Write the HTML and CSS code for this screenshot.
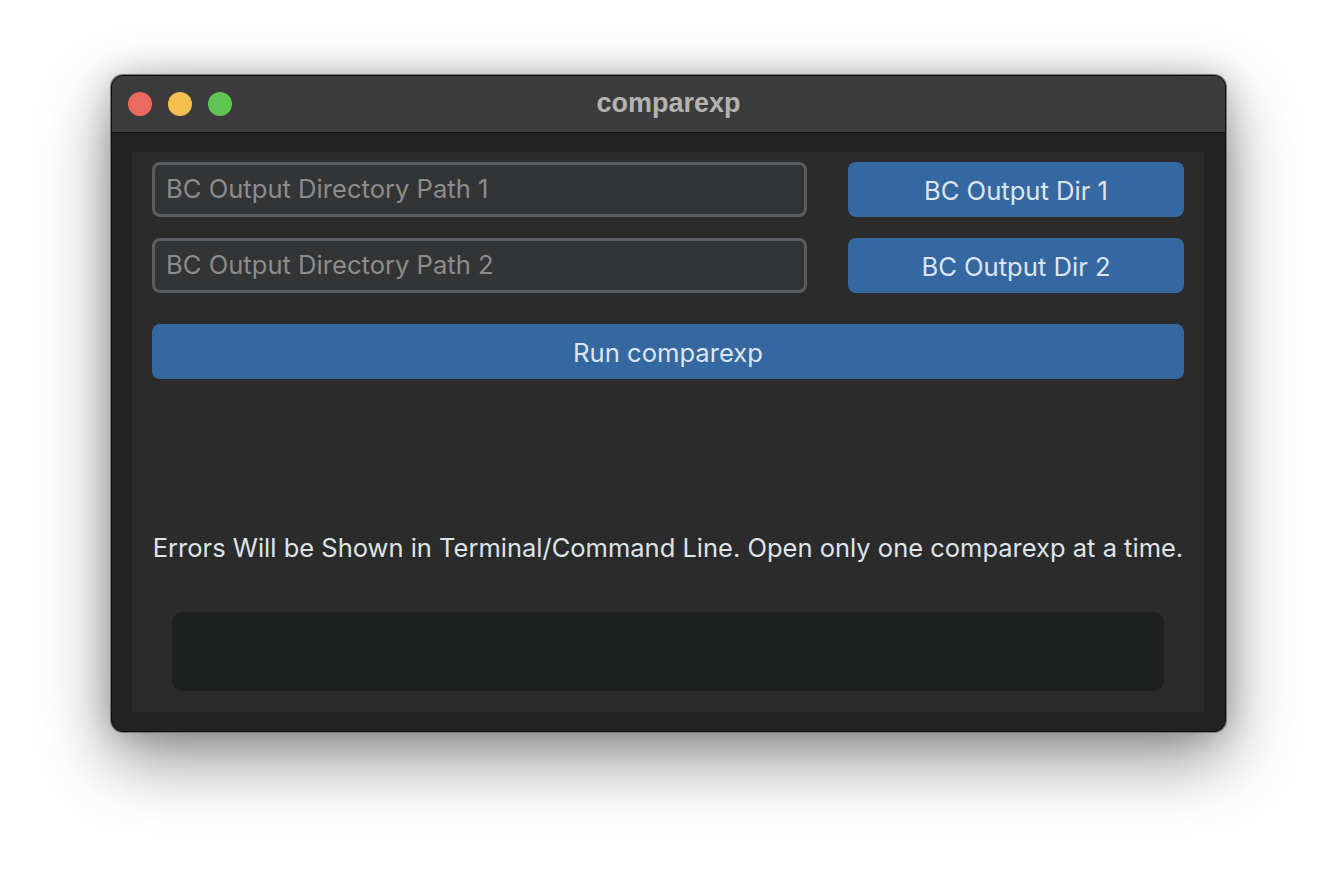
FILE: index.html
```html
<!DOCTYPE html>
<html>
<head>
<meta charset="utf-8">
<link rel="stylesheet" href="styles.css">
</head>
<body>
<div class="page">
  <div class="window">
    <div class="titlebar">
      <div class="lights">
        <span class="light red"></span>
        <span class="light yellow"></span>
        <span class="light green"></span>
      </div>
      <div class="title">comparexp</div>
    </div>
    <div class="content">
      <div class="panel">
        <div class="row">
          <div class="input">BC Output Directory Path 1</div>
          <div class="btn small">BC Output Dir 1</div>
        </div>
        <div class="row row2">
          <div class="input">BC Output Directory Path 2</div>
          <div class="btn small">BC Output Dir 2</div>
        </div>
        <div class="btn run">Run comparexp</div>
        <div class="note">Errors Will be Shown in Terminal/Command Line. Open only one comparexp at a time.</div>
        <div class="log"></div>
      </div>
    </div>
  </div>
</div>
</body>
</html>
```
FILE: styles.css
```css
html, body {
  margin: 0;
  padding: 0;
  background: #ffffff;
}
body {
  width: 1338px;
  height: 880px;
  overflow: hidden;
  font-family: Inter, "Noto Sans", "Liberation Sans", sans-serif;
}
.page {
  padding: 75px 0 0 111px;
}
.window {
  width: 1115px;
  height: 657px;
  box-sizing: border-box;
  border: 1px solid #0c0c0c;
  border-radius: 12px;
  overflow: hidden;
  background: #232323;
  box-shadow: 0 0 0 1px #7a7a7a, 0 26px 70px rgba(0,0,0,0.45), 0 0 30px rgba(0,0,0,0.2);
  display: flex;
  flex-direction: column;
}
.titlebar {
  height: 57px;
  flex: none;
  background: #3c3c3c;
  border-bottom: 1px solid #0e0e0e;
  box-sizing: border-box;
  display: flex;
  align-items: center;
  position: relative;
}
.lights {
  display: flex;
  gap: 16px;
  padding-left: 16px;
}
.light {
  width: 24px;
  height: 24px;
  border-radius: 50%;
  display: block;
}
.red { background: #ed6a5e; }
.yellow { background: #f5bf4f; }
.green { background: #61c554; }
.title {
  position: absolute;
  left: 0;
  right: 0;
  top: 0;
  bottom: 0;
  display: flex;
  align-items: center;
  justify-content: center;
  font-family: "Liberation Sans", Arial, sans-serif;
  font-weight: bold;
  font-size: 27px;
  color: #b3b3b3;
  padding-bottom: 2px;
}
.content {
  flex: 1;
  padding: 19px 21px 19px 20px;
  display: flex;
  min-width: 0;
}
.panel {
  flex: 1;
  min-width: 0;
  background: #2b2b2b;
  padding: 10px 20px 20px 20px;
  display: flex;
  flex-direction: column;
}
.row {
  display: flex;
  gap: 41px;
  height: 55px;
  flex: none;
}
.row2 {
  margin-top: 21px;
}
.input {
  flex: 1;
  min-width: 0;
  box-sizing: border-box;
  border: 3px solid #595c60;
  border-radius: 8px;
  background: #333436;
  color: #8c8c8c;
  font-size: 25.6px;
  display: flex;
  align-items: center;
  padding-left: 11px;
  padding-bottom: 2px;
}
.btn {
  background: #3568a1;
  border-radius: 8px;
  color: #dde5ef;
  font-size: 25.6px;
  display: flex;
  align-items: center;
  justify-content: center;
  padding-top: 2px;
  box-sizing: border-box;
}
.small {
  width: 336px;
  flex: none;
}
.run {
  height: 55px;
  flex: none;
  margin-top: 31px;
}
.note {
  margin-top: 154px;
  height: 30px;
  line-height: 30px;
  text-align: center;
  color: #dfe3ea;
  font-size: 25.5px;
  white-space: nowrap;
  display: flex;
  justify-content: center;
}
.log {
  margin: 49px 20px 0 20px;
  height: 79px;
  flex: none;
  background: #1f2020;
  border-radius: 10px;
}
```
